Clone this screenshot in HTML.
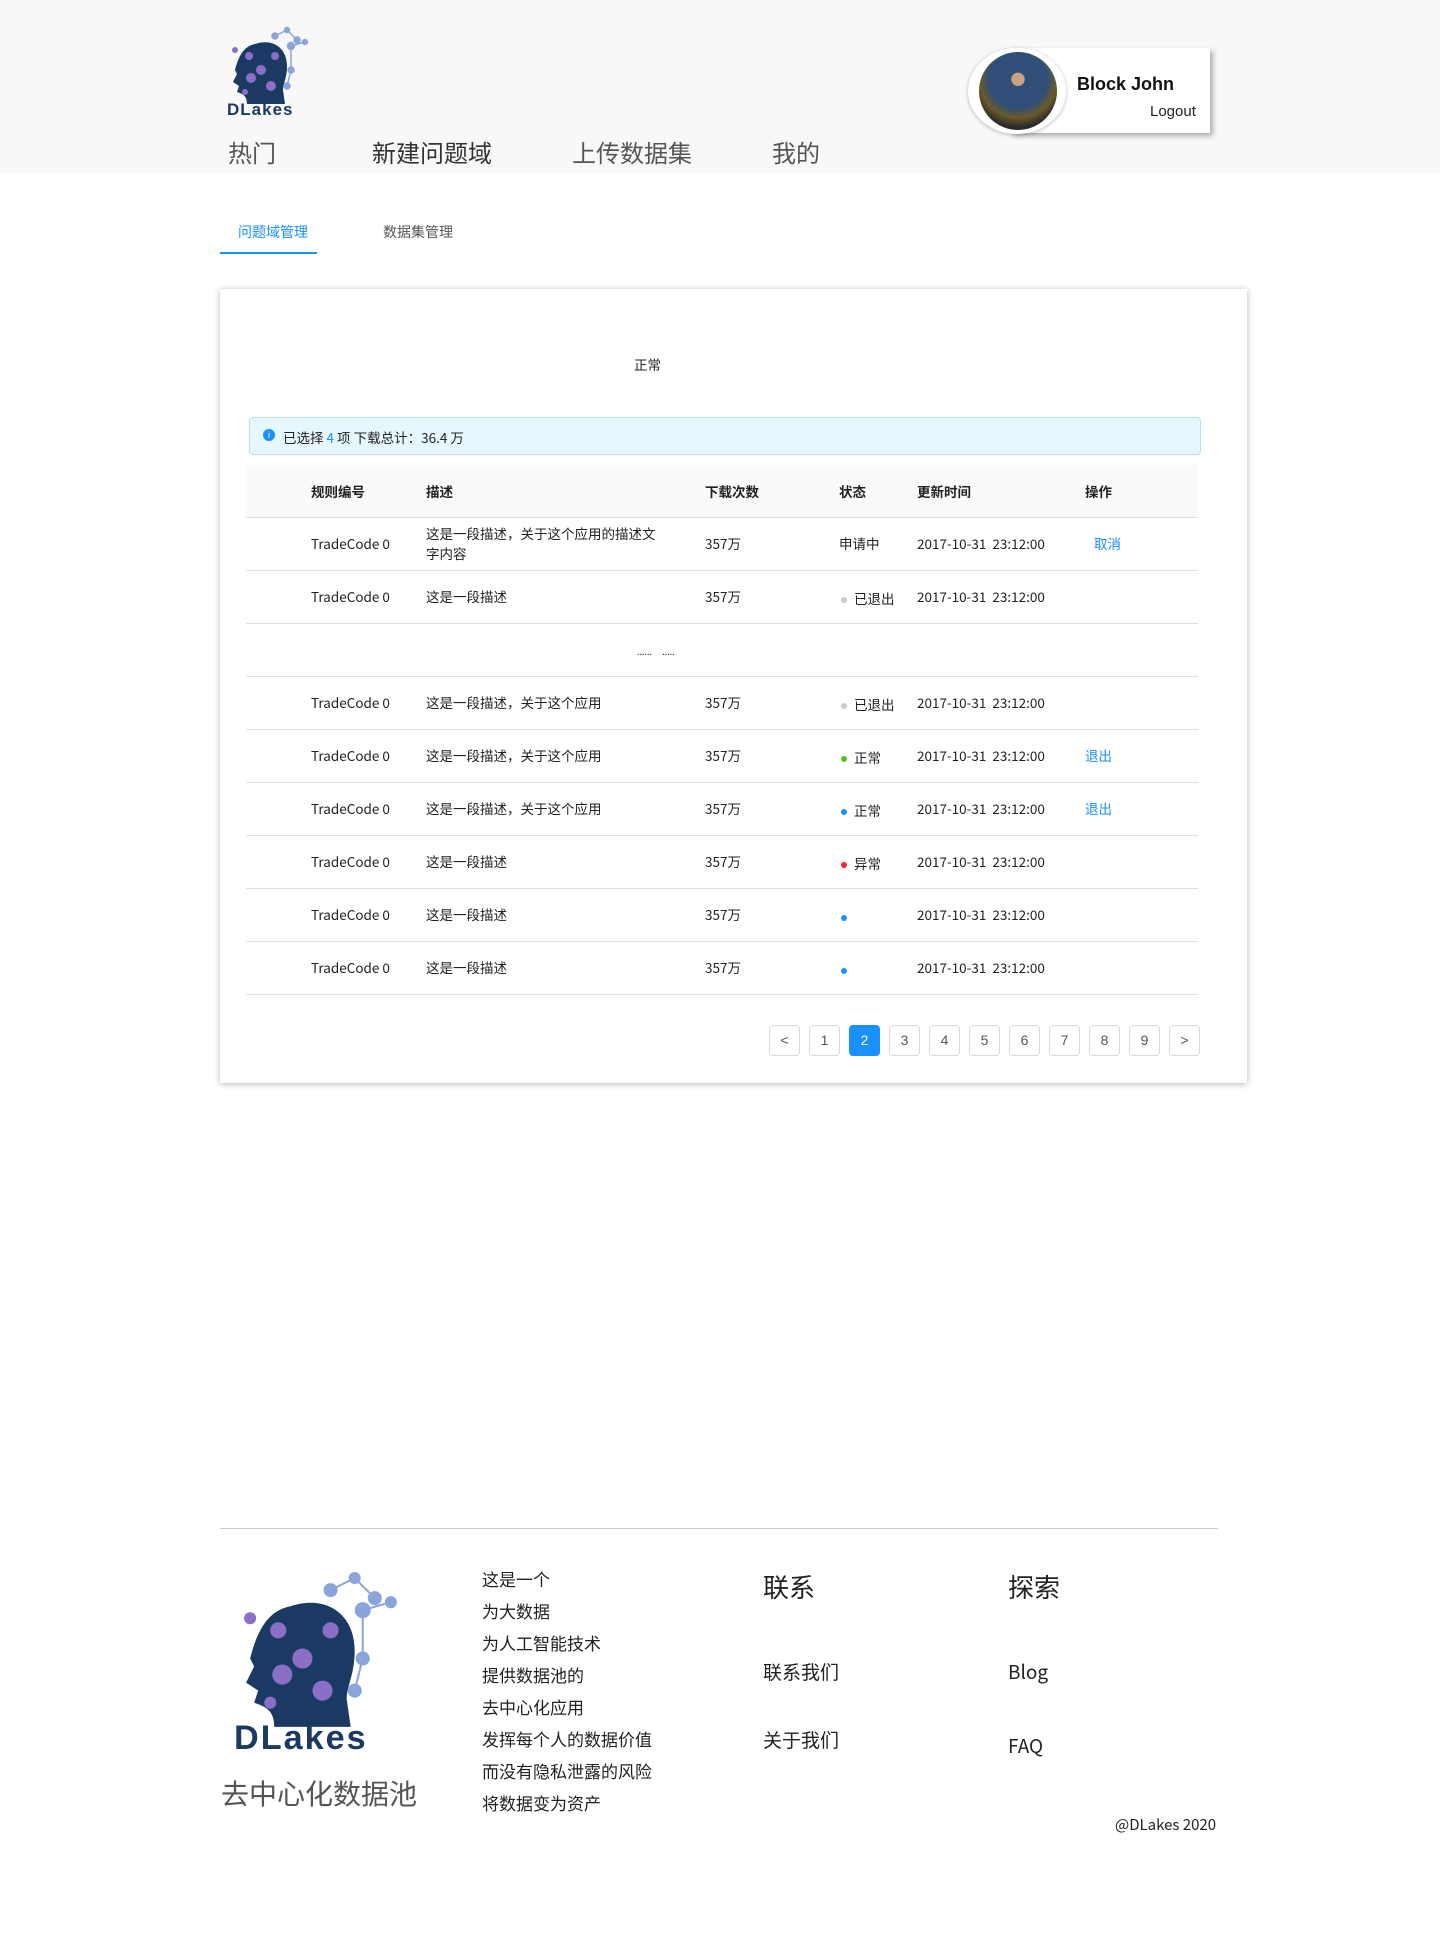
<!DOCTYPE html>
<html><head><meta charset="utf-8"><style>
*{margin:0;padding:0;box-sizing:border-box}
body{width:1440px;height:1941px;background:#fff;font-family:"Liberation Sans","Noto Sans CJK SC",sans-serif;position:relative;color:#222;overflow:hidden}
.abs{position:absolute}
.hdr{left:0;top:0;width:1440px;height:173px;background:#f8f8f8}
.nav{top:134px;font-size:24px;color:#555;font-family:"Noto Sans CJK SC",sans-serif}
.card{left:220px;top:289px;width:1027px;height:794px;background:#fff;box-shadow:0 1px 6px rgba(0,0,0,.3)}
.t{font-size:13.5px;color:#222;font-family:"Noto Sans CJK SC",sans-serif}
.line{left:246px;width:952px;height:1px;background:#e0e0e0}
.pg{top:1025px;width:31px;height:31px;border:1px solid #d9d9d9;border-radius:4px;font-size:14px;color:#555;text-align:center;line-height:29px;background:#fff}
.dot{display:inline-block;width:6px;height:6px;border-radius:50%;margin-right:7px;vertical-align:middle}
.f{font-family:"Noto Sans CJK SC",sans-serif;color:#222}
</style></head><body>
<div class="abs hdr"></div>
<svg class="abs" style="left:225px;top:26px" width="90" height="92" viewBox="0 0 90 92">
<path d="M30 18 C48 12 62 22 62 40 C62 52 58 58 58 64 L60 78 L22 78 C22 70 18 68 12 66 L14 60 L8 56 L12 48 L10 44 C14 28 20 20 30 18Z" fill="#1b3a63"/>
<g stroke="#8aa4dc" stroke-width="1.5" fill="#8aa4dc"><line x1="50" y1="10" x2="62" y2="4"/><line x1="62" y1="4" x2="72" y2="14"/><line x1="66" y1="20" x2="80" y2="16"/><line x1="66" y1="20" x2="66" y2="44"/><line x1="66" y1="44" x2="62" y2="60"/>
<circle cx="50" cy="10" r="3"/><circle cx="62" cy="4" r="2.5"/><circle cx="72" cy="14" r="3"/><circle cx="80" cy="16" r="2.5"/><circle cx="66" cy="20" r="3.5"/><circle cx="66" cy="44" r="3"/><circle cx="62" cy="60" r="3"/></g>
<g fill="#8b6fc4"><circle cx="10" cy="24" r="3"/><circle cx="24" cy="30" r="4"/><circle cx="36" cy="44" r="5"/><circle cx="26" cy="52" r="5"/><circle cx="46" cy="60" r="5"/><circle cx="50" cy="30" r="4"/><circle cx="20" cy="66" r="3"/></g>
<text x="2" y="89" font-family="Liberation Sans,sans-serif" font-weight="bold" font-size="17" fill="#1b3a63" letter-spacing="1">DLakes</text>
</svg>
<div class="abs nav" style="left:228px">热门</div>
<div class="abs nav" style="left:372px;color:#333">新建问题域</div>
<div class="abs nav" style="left:572px">上传数据集</div>
<div class="abs nav" style="left:772px">我的</div>
<div class="abs" style="left:1010px;top:48px;width:200px;height:85px;background:#fff;box-shadow:3px 3px 5px rgba(0,0,0,.3)"></div>
<div class="abs" style="left:968px;top:48px;width:98px;height:86px;border-radius:50%;background:#fff;box-shadow:0 1px 4px rgba(0,0,0,.25)"></div>
<div class="abs" style="left:979px;top:52px;width:78px;height:78px;border-radius:50%;background:radial-gradient(circle at 50% 35%,#c9a27e 0 10%,#2f4e78 11% 45%,#6a5a2a 60%,#2a2a2a 75%)"></div>
<div class="abs" style="left:1077px;top:74px;font-size:18px;font-weight:bold;color:#111">Block John</div>
<div class="abs" style="left:1150px;top:103px;font-size:15px;color:#222">Logout</div>
<div class="abs f" style="left:238px;top:222px;font-size:14px;color:#1890ff">问题域管理</div>
<div class="abs f" style="left:383px;top:222px;font-size:14px;color:#555">数据集管理</div>
<div class="abs" style="left:220px;top:252px;width:97px;height:2px;background:#1890ff"></div>
<div class="abs card"></div>
<div class="abs t" style="left:634px;top:354px">正常</div>
<div class="abs" style="left:249px;top:417px;width:952px;height:38px;background:#e6f7ff;border:1px solid #b5e1f5;border-radius:4px"></div>
<div class="abs" style="left:263px;top:429px;width:12px;height:12px;border-radius:50%;background:#1890ff;color:#fff;font-size:9px;text-align:center;line-height:12px">i</div>
<div class="abs t" style="left:283px;top:427px">已选择 <span style="color:#1890ff">4</span> 项 下载总计：36.4 万</div>
<div class="abs" style="left:246px;top:465px;width:952px;height:52px;background:#fafafa"></div>
<div class="abs t" style="left:311px;top:481px;font-weight:bold">规则编号</div>
<div class="abs t" style="left:426px;top:481px;font-weight:bold">描述</div>
<div class="abs t" style="left:705px;top:481px;font-weight:bold">下载次数</div>
<div class="abs t" style="left:839px;top:481px;font-weight:bold">状态</div>
<div class="abs t" style="left:917px;top:481px;font-weight:bold">更新时间</div>
<div class="abs t" style="left:1085px;top:481px;font-weight:bold">操作</div>
<div class="abs line" style="top:517px"></div><div class="abs line" style="top:570px"></div><div class="abs line" style="top:623px"></div><div class="abs line" style="top:676px"></div><div class="abs line" style="top:729px"></div><div class="abs line" style="top:782px"></div><div class="abs line" style="top:835px"></div><div class="abs line" style="top:888px"></div><div class="abs line" style="top:941px"></div><div class="abs line" style="top:994px"></div>
<div class="abs t" style="left:311px;top:533px">TradeCode 0</div>
<div class="abs t" style="left:426px;top:523px;width:232px;line-height:20px">这是一段描述，关于这个应用的描述文字内容</div>
<div class="abs t" style="left:705px;top:533px">357万</div>
<div class="abs t" style="left:839px;top:533px">申请中</div>
<div class="abs t" style="left:917px;top:533px">2017-10-31&nbsp; 23:12:00</div>
<div class="abs t" style="left:1094px;top:533px;color:#1890ff">取消</div>
<div class="abs t" style="left:311px;top:586px">TradeCode 0</div><div class="abs t" style="left:426px;top:586px">这是一段描述</div><div class="abs t" style="left:705px;top:586px">357万</div><div class="abs t" style="left:841px;top:588px"><span class="dot" style="background:#ccc"></span>已退出</div><div class="abs t" style="left:917px;top:586px">2017-10-31&nbsp; 23:12:00</div>
<div class="abs t" style="left:637px;top:645px;font-size:9px">......&nbsp;&nbsp;&nbsp;&nbsp; .....</div>
<div class="abs t" style="left:311px;top:692px">TradeCode 0</div><div class="abs t" style="left:426px;top:692px">这是一段描述，关于这个应用</div><div class="abs t" style="left:705px;top:692px">357万</div><div class="abs t" style="left:841px;top:694px"><span class="dot" style="background:#ccc"></span>已退出</div><div class="abs t" style="left:917px;top:692px">2017-10-31&nbsp; 23:12:00</div>
<div class="abs t" style="left:311px;top:745px">TradeCode 0</div><div class="abs t" style="left:426px;top:745px">这是一段描述，关于这个应用</div><div class="abs t" style="left:705px;top:745px">357万</div><div class="abs t" style="left:841px;top:747px"><span class="dot" style="background:#52c41a"></span>正常</div><div class="abs t" style="left:917px;top:745px">2017-10-31&nbsp; 23:12:00</div><div class="abs t" style="left:1085px;top:745px;color:#1890ff">退出</div>
<div class="abs t" style="left:311px;top:798px">TradeCode 0</div><div class="abs t" style="left:426px;top:798px">这是一段描述，关于这个应用</div><div class="abs t" style="left:705px;top:798px">357万</div><div class="abs t" style="left:841px;top:800px"><span class="dot" style="background:#1890ff"></span>正常</div><div class="abs t" style="left:917px;top:798px">2017-10-31&nbsp; 23:12:00</div><div class="abs t" style="left:1085px;top:798px;color:#1890ff">退出</div>
<div class="abs t" style="left:311px;top:851px">TradeCode 0</div><div class="abs t" style="left:426px;top:851px">这是一段描述</div><div class="abs t" style="left:705px;top:851px">357万</div><div class="abs t" style="left:841px;top:853px"><span class="dot" style="background:#f5222d"></span>异常</div><div class="abs t" style="left:917px;top:851px">2017-10-31&nbsp; 23:12:00</div>
<div class="abs t" style="left:311px;top:904px">TradeCode 0</div><div class="abs t" style="left:426px;top:904px">这是一段描述</div><div class="abs t" style="left:705px;top:904px">357万</div><div class="abs t" style="left:841px;top:906px"><span class="dot" style="background:#1890ff"></span></div><div class="abs t" style="left:917px;top:904px">2017-10-31&nbsp; 23:12:00</div>
<div class="abs t" style="left:311px;top:957px">TradeCode 0</div><div class="abs t" style="left:426px;top:957px">这是一段描述</div><div class="abs t" style="left:705px;top:957px">357万</div><div class="abs t" style="left:841px;top:959px"><span class="dot" style="background:#1890ff"></span></div><div class="abs t" style="left:917px;top:957px">2017-10-31&nbsp; 23:12:00</div>
<div class="abs pg" style="left:769px">&lt;</div>
<div class="abs pg" style="left:809px">1</div>
<div class="abs pg" style="left:849px;background:#1890ff;border-color:#1890ff;color:#fff">2</div>
<div class="abs pg" style="left:889px">3</div><div class="abs pg" style="left:929px">4</div><div class="abs pg" style="left:969px">5</div><div class="abs pg" style="left:1009px">6</div><div class="abs pg" style="left:1049px">7</div><div class="abs pg" style="left:1089px">8</div><div class="abs pg" style="left:1129px">9</div><div class="abs pg" style="left:1169px">&gt;</div>
<div class="abs" style="left:220px;top:1528px;width:998px;height:1px;background:#ccc"></div>
<svg class="abs" style="left:228px;top:1570px" width="185" height="185" viewBox="0 0 90 92">
<path d="M30 18 C48 12 62 22 62 40 C62 52 58 58 58 64 L60 78 L22 78 C22 70 18 68 12 66 L14 60 L8 56 L12 48 L10 44 C14 28 20 20 30 18Z" fill="#1b3a63"/>
<g stroke="#8aa4dc" stroke-width="1" fill="#8aa4dc"><line x1="50" y1="10" x2="62" y2="4"/><line x1="62" y1="4" x2="72" y2="14"/><line x1="66" y1="20" x2="80" y2="16"/><line x1="66" y1="20" x2="66" y2="44"/><line x1="66" y1="44" x2="62" y2="60"/>
<circle cx="50" cy="10" r="3"/><circle cx="62" cy="4" r="2.5"/><circle cx="72" cy="14" r="3"/><circle cx="80" cy="16" r="2.5"/><circle cx="66" cy="20" r="3.5"/><circle cx="66" cy="44" r="3"/><circle cx="62" cy="60" r="3"/></g>
<g fill="#8b6fc4"><circle cx="10" cy="24" r="3"/><circle cx="24" cy="30" r="4"/><circle cx="36" cy="44" r="5"/><circle cx="26" cy="52" r="5"/><circle cx="46" cy="60" r="5"/><circle cx="50" cy="30" r="4"/><circle cx="20" cy="66" r="3"/></g>
<text x="2" y="89" font-family="Liberation Sans,sans-serif" font-weight="bold" font-size="17" fill="#1b3a63" letter-spacing="1">DLakes</text>
</svg>
<div class="abs f" style="left:221px;top:1773px;font-size:28px;color:#555">去中心化数据池</div>
<div class="abs f" style="left:482px;top:1563px;font-size:17px;line-height:32px">这是一个<br>为大数据<br>为人工智能技术<br>提供数据池的<br>去中心化应用<br>发挥每个人的数据价值<br>而没有隐私泄露的风险<br>将数据变为资产</div>
<div class="abs f" style="left:763px;top:1568px;font-size:26px">联系</div>
<div class="abs f" style="left:1008px;top:1568px;font-size:26px">探索</div>
<div class="abs f" style="left:763px;top:1658px;font-size:19px">联系我们</div>
<div class="abs f" style="left:1008px;top:1658px;font-size:19px">Blog</div>
<div class="abs f" style="left:763px;top:1726px;font-size:19px">关于我们</div>
<div class="abs f" style="left:1008px;top:1732px;font-size:19px">FAQ</div>
<div class="abs f" style="left:1115px;top:1814px;font-size:15px">@DLakes 2020</div>
</body></html>
